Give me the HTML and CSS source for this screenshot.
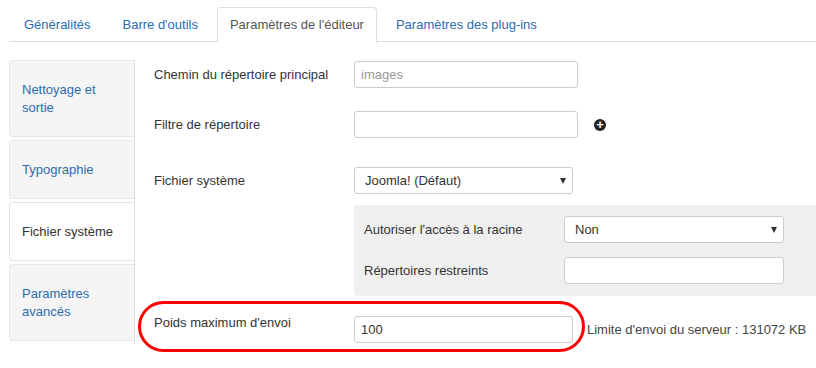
FILE: index.html
```html
<!DOCTYPE html>
<html lang="fr">
<head>
  <meta charset="UTF-8">
  <meta name="viewport" content="width=device-width, initial-scale=1.0">
  <title>Paramètres de l'éditeur</title>
  <link rel="stylesheet" href="styles.css">
</head>
<body>

  <ul class="nav-tabs">
    <li><a href="#">Généralités</a></li>
    <li><a href="#">Barre d'outils</a></li>
    <li class="active"><a href="#">Paramètres de l'éditeur</a></li>
    <li><a href="#">Paramètres des plug-ins</a></li>
  </ul>

  <div class="tabbable">
    <ul class="side-tabs">
      <li class="tall"><a href="#">Nettoyage et sortie</a></li>
      <li><a href="#">Typographie</a></li>
      <li class="active"><a href="#">Fichier système</a></li>
      <li class="tall"><a href="#">Paramètres avancés</a></li>
    </ul>

    <div class="tab-content">
      <div class="control-group row-1">
        <label class="control-label">Chemin du répertoire principal</label>
        <input type="text" class="input-wide" placeholder="images">
      </div>

      <div class="control-group row-2">
        <label class="control-label">Filtre de répertoire</label>
        <input type="text" class="input-wide">
        <span class="add-btn">+</span>
      </div>

      <div class="control-group row-3">
        <label class="control-label">Fichier système</label>
        <div class="select-wrap">
          <select class="input-select">
            <option>Joomla! (Défaut)</option>
          </select>
        </div>
      </div>

      <div class="sub-options">
        <div class="control-group">
          <label class="control-label">Autoriser l'accès à la racine</label>
          <div class="select-wrap select-wide">
            <select class="input-select">
              <option>Non</option>
            </select>
          </div>
        </div>
        <div class="control-group row-restricted">
          <label class="control-label">Répertoires restreints</label>
          <input type="text" class="input-sub">
        </div>
      </div>

      <div class="control-group row-5">
        <label class="control-label">Poids maximum d'envoi</label>
        <input type="text" class="input-select" value="100">
        <span class="help-inline">Limite d'envoi du serveur : 131072 KB</span>
        <div class="highlight"></div>
      </div>
    </div>
  </div>

</body>
</html>
```

FILE: styles.css
```css
body {
  font-family: "Liberation Sans", Arial, sans-serif;
  font-size: 13px;
  line-height: 18px;
  color: #333;
  background: #fff;
  margin: 0;
  padding: 0 0 23px;
}

a {
  text-decoration: none;
  color: #2d6cae;
}

/* onglets du haut */
.nav-tabs {
  display: flex;
  list-style: none;
  margin: 0 0 0 9px;
  padding: 0 0 0 2px;
  border-bottom: 1px solid #ddd;
  height: 42px;
  box-sizing: border-box;
}

.nav-tabs li {
  margin-top: 7px;
  margin-right: 6px;
  margin-bottom: -1px;
}

.nav-tabs li a {
  display: block;
  padding: 8px 12px;
  border: 1px solid transparent;
  border-radius: 4px 4px 0 0;
}

.nav-tabs li.active a {
  color: #555;
  background: #fff;
  border-color: #ddd #ddd transparent;
}

/* onglets de gauche */
.tabbable {
  display: flex;
  margin-top: 18px;
}

.side-tabs {
  list-style: none;
  margin: 0 0 0 9px;
  padding: 0;
  width: 125px;
  flex-shrink: 0;
}

.side-tabs li {
  margin-bottom: 3px;
}

.side-tabs li a {
  display: block;
  padding: 20px 12px 19px;
  background: #f5f5f5;
  border: 1px solid #e6e6e6;
  border-right: none;
  border-radius: 4px 0 0 4px;
}

.side-tabs li.active a {
  background: #fff;
  color: #333;
  border-color: #e3e3e3;
}

.tab-content {
  flex: 1;
  border-left: 1px solid #ddd;
  padding-left: 19px;
  padding-bottom: 1px;
  min-height: 283px;
}

.control-group {
  display: flex;
  align-items: center;
}

.control-label {
  width: 200px;
  flex-shrink: 0;
}

.row-1 { margin-top: 1px; }
.row-2 { margin-top: 23px; }
.row-3 { margin-top: 29px; }
.row-5 {
  margin-top: 20px;
  position: relative;
}

.row-5 .control-label {
  align-self: flex-start;
  margin-top: -2px;
}

input,
select {
  font-family: inherit;
  font-size: 13px;
  color: #333;
  height: 27px;
  box-sizing: border-box;
  border: 1px solid #ccc;
  border-radius: 3px;
  background: #fff;
  padding: 4px 6px;
  margin: 0;
}

input::placeholder {
  color: #999;
}

.input-wide { width: 224px; }
.input-select { width: 219px; }
.input-sub { width: 220px; }

.select-wrap {
  position: relative;
}

.select-wrap select {
  -webkit-appearance: none;
  appearance: none;
  padding: 4px 10px;
}

.select-wrap::after {
  content: "";
  position: absolute;
  right: 7px;
  top: 11px;
  border-left: 3px solid transparent;
  border-right: 3px solid transparent;
  border-top: 6px solid #333;
  pointer-events: none;
}

.select-wide select { width: 220px; }

.add-btn {
  display: flex;
  align-items: center;
  justify-content: center;
  width: 12px;
  height: 12px;
  margin-left: 16px;
  border-radius: 50%;
  background: #222;
  color: #fff;
  font-size: 13px;
  font-weight: bold;
  line-height: 1;
}

/* options du système de fichiers */
.sub-options {
  margin: 11px 0 0 200px;
  padding: 11px 0 12px 10px;
  background: #efefef;
  border-radius: 4px 0 0 4px;
}

.row-restricted {
  margin-top: 14px;
}

.help-inline {
  margin-left: 14px;
  color: #444;
}

/* entourage rouge */
.highlight {
  position: absolute;
  left: -16px;
  top: -15px;
  width: 447px;
  height: 51px;
  border: 3px solid #f00;
  border-radius: 26px;
  box-sizing: border-box;
}
```
